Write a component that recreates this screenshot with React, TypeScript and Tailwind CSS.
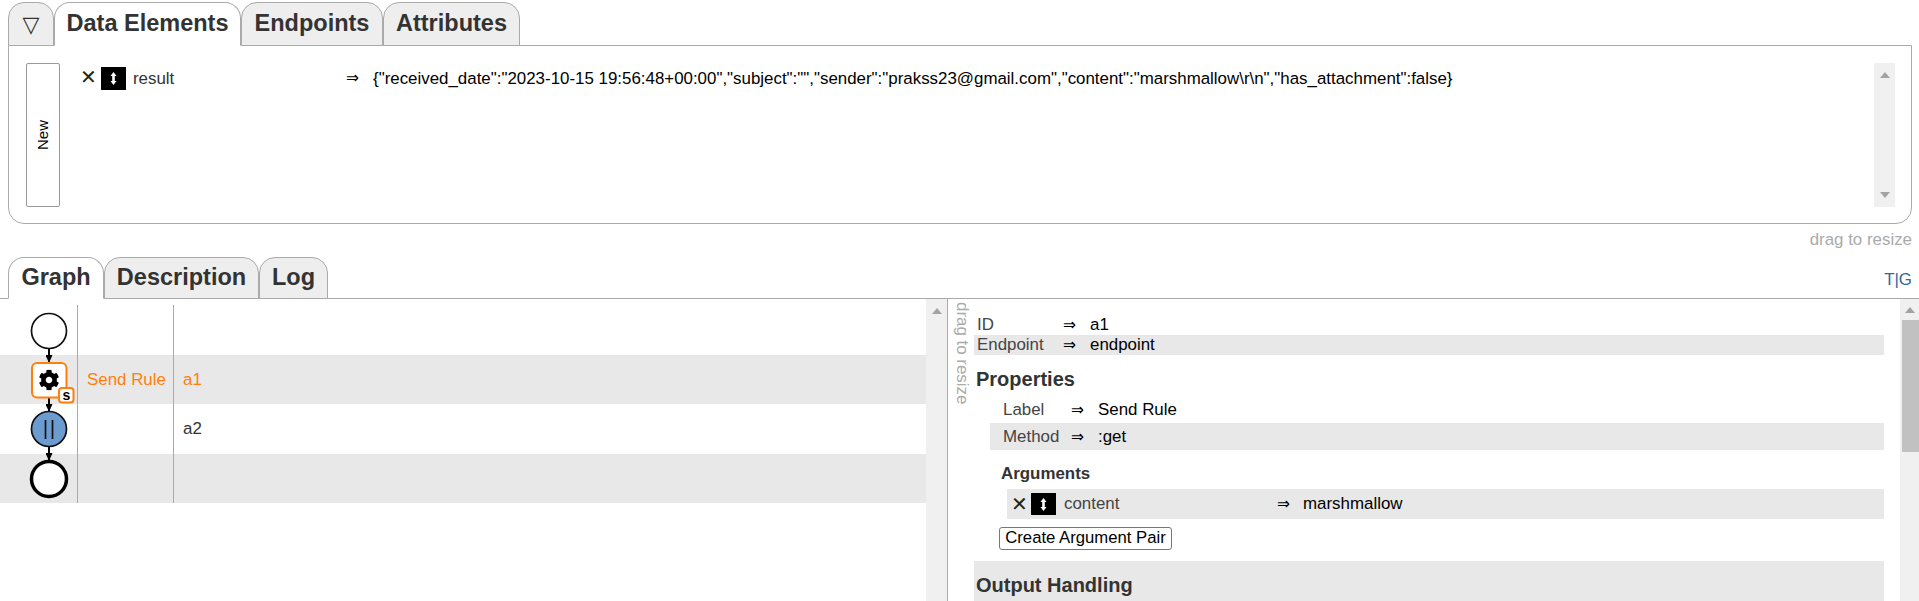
import { FaCog } from 'react-icons/fa';

function Tab({ label, active, size }: { label: string; active?: boolean; size: string }) {
  return (
    <div
      className={`${size} -mb-px flex items-center justify-center rounded-t-[16px] border border-[#aaaaaa] text-[23.5px] font-bold text-[#333333] ${
        active ? 'bg-white border-b-white z-10' : 'bg-[#eeeeee]'
      }`}
    >
      {label}
    </div>
  );
}

function MoveIcon({ size }: { size: string }) {
  return (
    <div className={`${size} bg-black flex items-center justify-center shrink-0`}>
      <svg width="9" height="13" viewBox="0 0 9 13">
        <path d="M4.5 0 L7.5 4 L5.8 4 L5.8 9 L7.5 9 L4.5 13 L1.5 9 L3.2 9 L3.2 4 L1.5 4 Z" fill="white" />
      </svg>
    </div>
  );
}

function Arrow() {
  return <span className="font-['DejaVu_Sans'] text-[15.5px]">⇒</span>;
}

function ScrollArrow({ down }: { down?: boolean }) {
  return (
    <svg width="10" height="6" viewBox="0 0 10 6" className={down ? 'rotate-180' : ''}>
      <path d="M5 0 L10 6 L0 6 Z" fill="#a3a3a3" />
    </svg>
  );
}

function Graph() {
  return (
    <svg width="78" height="198" viewBox="0 305 78 198" className="absolute left-0 top-0">
      <defs>
        <marker id="tip" markerWidth="8" markerHeight="7" refX="7" refY="3.5" orient="auto" markerUnits="userSpaceOnUse">
          <path d="M0 0 L8 3.5 L0 7 Z" fill="black" />
        </marker>
      </defs>
      <line x1="49" y1="349" x2="49" y2="362" stroke="black" strokeWidth="2" markerEnd="url(#tip)" />
      <line x1="49" y1="398" x2="49" y2="411" stroke="black" strokeWidth="2" markerEnd="url(#tip)" />
      <line x1="49" y1="447" x2="49" y2="460" stroke="black" strokeWidth="2" markerEnd="url(#tip)" />
      <circle cx="49" cy="331" r="17.5" fill="white" stroke="#111111" strokeWidth="1.7" />
      <rect x="32" y="363" width="34.5" height="34.5" rx="5" fill="white" stroke="#ff7f0e" strokeWidth="2" />
      <FaCog x="38.5" y="369.5" size={21} color="black" />
      <rect x="59" y="388" width="14.5" height="14.5" rx="3" fill="white" stroke="#ff7f0e" strokeWidth="2" />
      <text x="66.3" y="400" textAnchor="middle" fontSize="14" fontWeight="700" fontFamily="Liberation Sans">s</text>
      <circle cx="49" cy="429" r="17.5" fill="#6c9bcf" stroke="#111111" strokeWidth="1.7" />
      <line x1="45.5" y1="420" x2="45.5" y2="439" stroke="#111111" strokeWidth="1.7" />
      <line x1="52.5" y1="420" x2="52.5" y2="439" stroke="#111111" strokeWidth="1.7" />
      <circle cx="49" cy="479" r="17.5" fill="white" stroke="black" strokeWidth="3.5" />
    </svg>
  );
}

function GraphRow({ label, id, grey, orange, h }: { label?: string; id?: string; grey?: boolean; orange?: boolean; h: string }) {
  return (
    <div className={`${h} flex ${grey ? 'bg-[#e8e8e8]' : ''} ${orange ? 'text-[#ff7f0e]' : 'text-[#333333]'}`}>
      <div className="w-[78px] border-r border-[#aaaaaa]" />
      <div className="w-[96px] border-r border-[#aaaaaa] pl-[9px] flex items-center">{label}</div>
      <div className="pl-[9px] flex items-center">{id}</div>
    </div>
  );
}

export default function App() {
  return (
    <div className="w-[1919px] h-[601px] overflow-hidden bg-white font-['Liberation_Sans',Arial,sans-serif] text-[16.9px] text-black flex flex-col">
      {/* top tabs + data elements */}
      <div className="pt-[2px] pl-[8px] pr-[7px]">
        <div className="flex items-end">
          <div className="w-[46px] h-[44px] -mb-px flex items-center justify-center rounded-t-[16px] border border-[#aaaaaa] bg-[#eeeeee] font-['DejaVu_Sans'] text-[22px] text-[#333333]">▽</div>
          <Tab label="Data Elements" size="w-[187px] h-[44px]" active />
          <Tab label="Endpoints" size="w-[142px] h-[44px]" />
          <Tab label="Attributes" size="w-[137px] h-[44px]" />
        </div>
        <div className="h-[179px] border border-[#aaaaaa] rounded-b-[16px] pt-[17px] pb-[16px] pl-[17px] pr-[16px] flex bg-white">
          <div className="w-[34px] border border-[#999999] rounded-[2px] flex items-center justify-center shrink-0">
            <span className="[writing-mode:vertical-rl] rotate-180 text-[15px]">New</span>
          </div>
          <div className="flex-1 flex items-start pl-[20px] pt-[4px]">
            <span className="w-[21px] text-[20px] leading-[21px] text-[#222222]">✕</span>
            <MoveIcon size="w-[25px] h-[23px]" />
            <span className="w-[220px] pl-[7px] leading-[23px] text-[#333333]">result</span>
            <span className="w-[27px] leading-[21px]"><Arrow /></span>
            <span className="leading-[23px] whitespace-nowrap">{'{"received_date":"2023-10-15 19:56:48+00:00","subject":"","sender":"prakss23@gmail.com","content":"marshmallow\\r\\n","has_attachment":false}'}</span>
          </div>
          <div className="w-[21px] bg-[#f0f0f0] flex flex-col items-center justify-between py-[9px]">
            <ScrollArrow />
            <ScrollArrow down />
          </div>
        </div>
        <div className="h-[32px] pt-[3px] text-right text-[#aaaaaa]">drag to resize</div>
      </div>

      {/* bottom tabs */}
      <div className="h-[43px] border-b border-[#aaaaaa] pl-[8px] pr-[7px] flex items-end">
        <Tab label="Graph" size="w-[96px] h-[42px]" active />
        <Tab label="Description" size="w-[155px] h-[42px]" />
        <Tab label="Log" size="w-[69px] h-[42px]" />
        <div className="ml-auto mb-[6px] text-[#336699]">T|G</div>
      </div>

      {/* graph + details */}
      <div className="flex-1 flex min-h-0">
        <div className="w-[948px] border-r border-[#aaaaaa] flex shrink-0">
          <div className="flex-1 pt-[6px]">
            <div className="relative">
              <GraphRow h="h-[50px]" />
              <GraphRow h="h-[49px]" label="Send Rule" id="a1" grey orange />
              <GraphRow h="h-[50px]" id="a2" />
              <GraphRow h="h-[49px]" grey />
              <Graph />
            </div>
          </div>
          <div className="w-[21px] bg-[#f0f0f0] flex justify-center pt-[9px]">
            <ScrollArrow />
          </div>
        </div>

        <div className="w-[26px] shrink-0 pl-[6px] pt-[3px]">
          <span className="block [writing-mode:vertical-rl] leading-[16px] text-[#aaaaaa]">drag to resize</span>
        </div>

        <div className="w-[910px] shrink-0 pt-[16px]">
          <div className="h-[20px] flex items-center pl-[3px]">
            <span className="w-[86px] text-[#444444]">ID</span>
            <span className="w-[27px]"><Arrow /></span>
            <span>a1</span>
          </div>
          <div className="h-[20px] bg-[#e8e8e8] flex items-center pl-[3px]">
            <span className="w-[86px] text-[#444444]">Endpoint</span>
            <span className="w-[27px]"><Arrow /></span>
            <span>endpoint</span>
          </div>
          <h2 className="text-[20px] font-bold text-[#333333] pl-[2px] pt-[13px] leading-[23px]">Properties</h2>
          <div className="mt-[5px] ml-[16px]">
            <div className="h-[27px] flex items-center pl-[13px]">
              <span className="w-[68px] text-[#444444]">Label</span>
              <span className="w-[27px]"><Arrow /></span>
              <span>Send Rule</span>
            </div>
            <div className="h-[27px] bg-[#e8e8e8] flex items-center pl-[13px]">
              <span className="w-[68px] text-[#444444]">Method</span>
              <span className="w-[27px]"><Arrow /></span>
              <span>:get</span>
            </div>
            <h3 className="font-bold text-[#333333] pl-[11px] pt-[15px] leading-[18px]">Arguments</h3>
            <div className="ml-[17px] mt-[6px] h-[30px] bg-[#e8e8e8] flex items-center pl-[4px]">
              <span className="w-[20px] text-[20px] leading-[21px] text-[#222222]">✕</span>
              <MoveIcon size="w-[25px] h-[22px]" />
              <span className="w-[221px] pl-[8px] text-[#444444]">content</span>
              <span className="w-[26px]"><Arrow /></span>
              <span>marshmallow</span>
            </div>
            <button className="block ml-[9px] mt-[8px] h-[23px] w-[173px] border border-[#777777] rounded-[3px] bg-white text-[16.7px] leading-none whitespace-nowrap">
              Create Argument Pair
            </button>
          </div>
          <div className="mt-[11px] h-[60px] bg-[#e8e8e8] pl-[2px] pt-[13px] text-[20px] leading-[23px] font-bold text-[#333333]">Output Handling</div>
        </div>

        <div className="ml-[16px] flex-1 bg-[#f0f0f0] pl-[2px] flex flex-col">
          <div className="h-[21px] flex items-center justify-center pr-[2px]"><ScrollArrow /></div>
          <div className="h-[132px] bg-[#c1c1c1]" />
        </div>
      </div>
    </div>
  );
}
